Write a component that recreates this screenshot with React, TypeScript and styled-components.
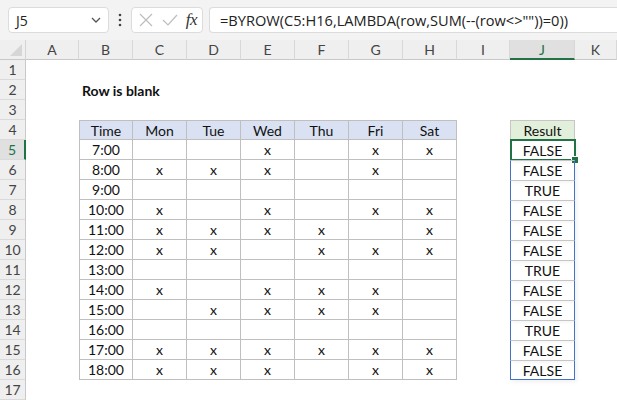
import React from "react";
import styled, { createGlobalStyle } from "styled-components";

const GlobalStyle = createGlobalStyle`
  html, body {
    margin: 0;
    padding: 0;
    background: #ffffff;
    overflow: hidden;
  }
`;

const COLS = ["A", "B", "C", "D", "E", "F", "G", "H", "I", "J", "K"];
const DAYS = ["Mon", "Tue", "Wed", "Thu", "Fri", "Sat"];

// x marks per hour, Mon..Sat
const DATA: [string, string][] = [
  ["7:00", "..x.xx"],
  ["8:00", "xxx.x."],
  ["9:00", "......"],
  ["10:00", "x.x.xx"],
  ["11:00", "xxxx.x"],
  ["12:00", "xx.xxx"],
  ["13:00", "......"],
  ["14:00", "x.xxx."],
  ["15:00", ".xxxx."],
  ["16:00", "......"],
  ["17:00", "xxxxxx"],
  ["18:00", "xxx.xx"],
];

type Variant = "plain" | "title" | "th" | "td" | "rh" | "rd";

export default function App() {
  const rows: React.ReactNode[] = [];

  for (let r = 1; r <= 17; r++) {
    rows.push(
      <RowHead key={`rh${r}`} $selected={r === 5}>
        {r}
      </RowHead>
    );
    COLS.forEach((col, ci) => {
      const key = `${col}${r}`;
      let variant: Variant = "plain";
      let text = "";
      let first = false;
      let last = false;

      if (r === 2 && col === "B") {
        variant = "title";
        text = "Row is blank";
      }
      if (r >= 4 && r <= 16 && ci >= 1 && ci <= 7) {
        const isHead = r === 4;
        variant = isHead ? "th" : "td";
        first = ci === 1;
        if (isHead) text = ci === 1 ? "Time" : DAYS[ci - 2];
        else {
          const [time, marks] = DATA[r - 5];
          text = ci === 1 ? time : marks[ci - 2] === "x" ? "x" : "";
        }
      }
      if (col === "J" && r >= 4 && r <= 16) {
        if (r === 4) {
          variant = "rh";
          text = "Result";
        } else {
          variant = "rd";
          text = DATA[r - 5][1] === "......" ? "TRUE" : "FALSE";
          last = r === 16;
        }
      }

      rows.push(
        <Cell key={key} $variant={variant} $first={first} $last={last}>
          {text}
          {key === "J5" && (
            <Selection>
              <FillHandle />
            </Selection>
          )}
        </Cell>
      );
    });
  }

  return (
    <>
      <GlobalStyle />
      <Page>
        <Toolbar>
          <NameBox>
            <span>J5</span>
            <svg width="12" height="8" viewBox="0 0 12 8">
              <polyline points="2,2 6,6 10,2" fill="none" stroke="#555" strokeWidth="1.3" />
            </svg>
          </NameBox>
          <Dots>
            <svg width="4" height="14" viewBox="0 0 4 14">
              <circle cx="2" cy="2" r="1.3" fill="#444" />
              <circle cx="2" cy="7" r="1.3" fill="#444" />
              <circle cx="2" cy="12" r="1.3" fill="#444" />
            </svg>
          </Dots>
          <FormulaButtons>
            <svg width="16" height="16" viewBox="0 0 16 16">
              <path d="M2 2 L14 14 M14 2 L2 14" stroke="#bdbdbd" strokeWidth="1.2" fill="none" />
            </svg>
            <svg width="18" height="16" viewBox="0 0 18 16">
              <path d="M2 8 L7 13 L16 3" stroke="#bdbdbd" strokeWidth="1.2" fill="none" />
            </svg>
            <Fx>fx</Fx>
          </FormulaButtons>
          <FormulaInput>=BYROW(C5:H16,LAMBDA(row,SUM(--(row&lt;&gt;""))=0))</FormulaInput>
        </Toolbar>
        <Sheet>
          <Corner>
            <svg width="12" height="12" viewBox="0 0 12 12">
              <polygon points="12,0 12,12 0,12" fill="#d6d6d6" />
            </svg>
          </Corner>
          {COLS.map((c) => (
            <ColHead key={c} $selected={c === "J"}>
              {c}
            </ColHead>
          ))}
          {rows}
        </Sheet>
      </Page>
    </>
  );
}

const Page = styled.div`
  width: 617px;
  height: 400px;
  display: flex;
  flex-direction: column;
  background: #ffffff;
  font-family: Lato, "Liberation Sans", sans-serif;
`;

const Toolbar = styled.div`
  height: 40px;
  box-sizing: border-box;
  padding: 7px 0 7px 8px;
  display: flex;
  align-items: stretch;
  background: #f3f3f3;
`;

const NameBox = styled.div`
  width: 101px;
  box-sizing: border-box;
  border: 1px solid #dcdcdc;
  border-radius: 4px;
  background: #ffffff;
  display: flex;
  align-items: center;
  justify-content: space-between;
  padding: 0 6px 0 7px;
  font-family: "Open Sans", "Noto Sans", sans-serif;
  font-size: 14px;
  color: #222;
`;

const Dots = styled.div`
  width: 22px;
  display: flex;
  align-items: center;
  justify-content: center;
`;

const FormulaButtons = styled.div`
  width: 72px;
  box-sizing: border-box;
  border: 1px solid #dcdcdc;
  border-radius: 4px;
  background: #ffffff;
  display: flex;
  align-items: center;
  justify-content: space-between;
  padding: 0 5px 0 6px;
`;

const Fx = styled.span`
  font-family: "Liberation Serif", "DejaVu Serif", serif;
  font-style: italic;
  font-size: 17px;
  color: #333;
  letter-spacing: -0.5px;
`;

const FormulaInput = styled.div`
  flex: 1;
  margin-left: 6px;
  box-sizing: border-box;
  border: 1px solid #dcdcdc;
  border-right: none;
  border-radius: 4px 0 0 4px;
  background: #ffffff;
  display: flex;
  align-items: center;
  padding-left: 10px;
  font-family: "Open Sans", "Noto Sans", sans-serif;
  font-size: 14.6px;
  color: #222;
  white-space: nowrap;
  overflow: hidden;
`;

const Sheet = styled.div`
  display: grid;
  grid-template-columns: 26px 53px repeat(7, 54px) 53px 65px 1fr;
  grid-template-rows: 20px;
  grid-auto-rows: 20px;
`;

const Corner = styled.div`
  background: #efefef;
  border-right: 1px solid #d4d4d4;
  border-bottom: 1px solid #c8c8c8;
  box-sizing: border-box;
  display: flex;
  align-items: flex-end;
  justify-content: flex-end;
  padding: 0 3px 3px 0;
`;

const ColHead = styled.div<{ $selected?: boolean }>`
  box-sizing: border-box;
  background: ${(p) => (p.$selected ? "#e0e0e0" : "#efefef")};
  border-right: 1px solid #d8d8d8;
  border-bottom: ${(p) => (p.$selected ? "2px solid #217346" : "1px solid #c8c8c8")};
  color: ${(p) => (p.$selected ? "#217346" : "#444")};
  font-size: 14px;
  display: flex;
  align-items: center;
  justify-content: center;
`;

const RowHead = styled.div<{ $selected?: boolean }>`
  box-sizing: border-box;
  background: ${(p) => (p.$selected ? "#e0e0e0" : "#efefef")};
  border-right: ${(p) => (p.$selected ? "2px solid #217346" : "1px solid #c8c8c8")};
  border-bottom: 1px solid #dadada;
  color: ${(p) => (p.$selected ? "#217346" : "#444")};
  font-size: 14px;
  display: flex;
  align-items: center;
  justify-content: center;
`;

const borderFor = (v: Variant, first: boolean, last: boolean) => {
  switch (v) {
    case "th":
    case "td":
      return `
        border-right: 1px solid #bfbfbf;
        border-bottom: 1px solid #bfbfbf;
        ${first ? "border-left: 1px solid #bfbfbf;" : ""}
        ${v === "th" ? "border-top: 1px solid #bfbfbf;" : ""}
      `;
    case "rh":
      return `border: 1px solid #c6c6c6; border-bottom: none;`;
    case "rd":
      return `
        border-left: 1px solid #4472c4;
        border-right: 1px solid #4472c4;
        border-top: 1px solid #c6c6c6;
        ${last ? "border-bottom: 1px solid #4472c4;" : ""}
      `;
    default:
      return "";
  }
};

const Cell = styled.div<{ $variant: Variant; $first?: boolean; $last?: boolean }>`
  position: relative;
  box-sizing: border-box;
  display: flex;
  align-items: center;
  justify-content: ${(p) => (p.$variant === "title" ? "flex-start" : "center")};
  padding-left: ${(p) => (p.$variant === "title" ? "3px" : "0")};
  font-size: 14px;
  color: #111;
  white-space: nowrap;
  font-weight: ${(p) => (p.$variant === "title" ? 700 : 400)};
  background: ${(p) =>
    p.$variant === "th" ? "#d9e1f2" : p.$variant === "rh" ? "#e2efda" : "transparent"};
  ${(p) => borderFor(p.$variant, !!p.$first, !!p.$last)}
  ${(p) => (p.$variant === "rd" ? "box-shadow: 2px 2px 4px rgba(0,0,0,0.06);" : "")}
`;

const Selection = styled.div`
  position: absolute;
  top: -2px;
  left: -1px;
  right: -2px;
  bottom: -1px;
  border: 2px solid #217346;
  pointer-events: none;
`;

const FillHandle = styled.div`
  position: absolute;
  right: -5px;
  bottom: -5px;
  width: 6px;
  height: 6px;
  background: #217346;
  border: 1px solid #ffffff;
`;
